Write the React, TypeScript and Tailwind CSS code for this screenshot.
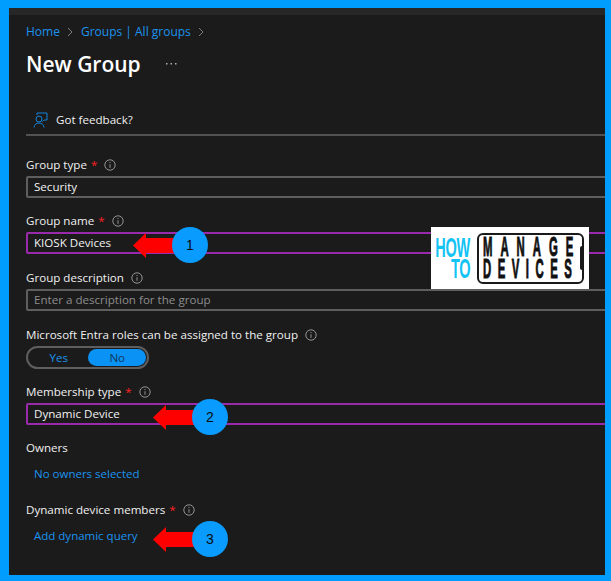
import React from "react";

const font = { fontFamily: '"Open Sans", "Noto Sans", sans-serif' };

function Info() {
  return (
    <svg width="12" height="12" viewBox="0 0 12 12" className="ml-[7px] shrink-0" fill="none">
      <circle cx="6" cy="6" r="5.2" stroke="#a0a0a0" strokeWidth="0.9" />
      <path d="M6 5.2V8.8" stroke="#a0a0a0" strokeWidth="0.9" />
      <circle cx="6" cy="3.5" r="0.6" fill="#a0a0a0" />
    </svg>
  );
}

function Label({ text, req, mt }: { text: string; req?: boolean; mt: string }) {
  return (
    <div className={`flex items-center h-[16px] text-[11.6px] leading-[16px] text-[#f0f0f0] ${mt}`}>
      <span>{text}</span>
      {req && <span className="ml-[4px] text-[#ff2020]">*</span>}
      <Info />
    </div>
  );
}

function Field({ text, purple, dim }: { text: string; purple?: boolean; dim?: boolean }) {
  return (
    <div
      className={`-mr-[10px] mt-[3px] h-[22px] flex items-center pl-[6px] rounded-[2px] border-[2px] text-[11.6px] ${
        purple ? "border-[#9a2aac]" : "border-[#5e5e5e]"
      } ${dim ? "text-[#8d8d8d]" : "text-[#f2f2f2]"}`}
    >
      {text}
    </div>
  );
}

function Marker({ n, x, y }: { n: number; x: string; y: string }) {
  return (
    <div className={`absolute flex items-center ${x} ${y}`}>
      <svg width="41" height="25" viewBox="0 0 41 25">
        <path d="M0 12.500L13 0V5H41V20H13V25Z" fill="#ff0000" />
      </svg>
      <div className="w-[36px] h-[36px] -ml-[2px] rounded-full bg-[#0a9bff] flex items-center justify-center text-[14px] text-[#0b0b0b]" style={{ fontFamily: '"Liberation Sans", sans-serif' }}>
        {n}
      </div>
    </div>
  );
}

function Logo() {
  return (
    <div className="absolute left-[431px] top-[227px] w-[158px] h-[62px] bg-white flex items-center overflow-hidden" style={{ fontFamily: '"Liberation Sans", sans-serif' }}>
      <div className="w-[39px] flex flex-col items-end text-[#12c3f4] font-bold text-[28px] leading-[21px]">
        <span className="origin-right scale-x-[0.52] tracking-[-0.5px]">HOW</span>
        <span className="origin-right scale-x-[0.52] tracking-[-0.5px]">TO</span>
      </div>
      <div className="relative ml-[7px] w-[107px] h-[51px] rounded-[6px] border-[2px] border-[#1a1a1a] flex flex-col justify-center pl-[4px] text-[#111] font-bold text-[27px] leading-[22px] [-webkit-text-stroke:1px_#111]">
        <div className="whitespace-nowrap origin-left scale-x-[0.42] tracking-[19px]">MANAGE</div>
        <div className="whitespace-nowrap origin-left scale-x-[0.42] tracking-[15.500px]">DEVICES</div>
        <div className="absolute -right-[2px] top-[11px] w-[4px] h-[24px] bg-[#1a1a1a] rounded-l-[2px]" />
      </div>
    </div>
  );
}

export default function App() {
  return (
    <div className="relative w-[611px] h-[581px] overflow-hidden bg-[#009dff] pl-[9px] pt-[8px] pr-[6px] pb-[6px]" style={font}>
      <div className="h-full overflow-hidden bg-[#1b1b1b]">
        <div className="h-[7px] bg-[#272727]" />
        <div className="pl-[17px]">
          <div className="flex items-center mt-[9px] h-[16px] text-[12px] text-[#1b93ee]">
            <span>Home</span>
            <svg width="6" height="10" viewBox="0 0 6 10" className="mx-[7.500px]" fill="none"><path d="M1 1l4 4-4 4" stroke="#8a8a8a" strokeWidth="0.9" /></svg>
            <span>Groups | All groups</span>
            <svg width="6" height="10" viewBox="0 0 6 10" className="ml-[7px]" fill="none"><path d="M1 1l4 4-4 4" stroke="#8a8a8a" strokeWidth="0.9" /></svg>
          </div>
          <div className="flex items-center mt-[10px] h-[28px]">
            <span className="text-[21px] font-semibold text-white leading-[28px]">New Group</span>
            <svg width="11" height="2" viewBox="0 0 11 2" className="ml-[25px] -mt-[1px]" fill="#b0b0b0">
              <rect x="0" y="0" width="1.500" height="1.500" />
              <rect x="4.500" y="0" width="1.500" height="1.500" />
              <rect x="9" y="0" width="1.500" height="1.500" />
            </svg>
          </div>
          <div className="flex items-center mt-[33px] h-[18px] pl-[7px]">
            <svg width="15" height="16" viewBox="0 0 15 16" fill="none" stroke="#1683d8" strokeWidth="1">
              <circle cx="6" cy="7" r="3" />
              <path d="M1 15.500c.3-3 2.300-4.500 5-4.500s4.700 1.500 5 4.500" />
              <path d="M4 3V1h10v7h-3l-1.500 1.500" />
            </svg>
            <span className="ml-[8px] text-[11.6px] text-[#f0f0f0]">Got feedback?</span>
          </div>
          <div className="mt-[5px] h-[2px] bg-[#525252]" />

          <Label text="Group type" req mt="mt-[21px]" />
          <Field text="Security" />
          <Label text="Group name" req mt="mt-[15px]" />
          <Field text="KIOSK Devices" purple />
          <Label text="Group description" mt="mt-[16px]" />
          <Field text="Enter a description for the group" dim />
          <Label text="Microsoft Entra roles can be assigned to the group" mt="mt-[16px]" />
          <div className="mt-[3px] w-[123px] h-[23px] rounded-full border-[2px] border-[#5e5e5e] flex items-center px-[1px] text-[11.6px]">
            <span className="w-[60px] text-center text-[#1b93ee]">Yes</span>
            <span className="w-[58px] h-[17px] leading-[17px] rounded-full bg-[#0a93f5] text-center text-[#10365a]">No</span>
          </div>
          <Label text="Membership type" req mt="mt-[15px]" />
          <Field text="Dynamic Device" purple />
          <div className="mt-[15px] h-[16px] text-[11.6px] leading-[16px] text-[#f0f0f0]">Owners</div>
          <div className="mt-[10px] pl-[8px] h-[16px] text-[11.5px] leading-[16px] text-[#1b93ee]">No owners selected</div>
          <Label text="Dynamic device members" req mt="mt-[20px]" />
          <div className="mt-[10px] pl-[8px] h-[16px] text-[11.5px] leading-[16px] text-[#1b93ee]">Add dynamic query</div>
        </div>
      </div>
      <Logo />
      <Marker n={1} x="left-[133px]" y="top-[227px]" />
      <Marker n={2} x="left-[153px]" y="top-[399px]" />
      <Marker n={3} x="left-[153px]" y="top-[521px]" />
    </div>
  );
}
